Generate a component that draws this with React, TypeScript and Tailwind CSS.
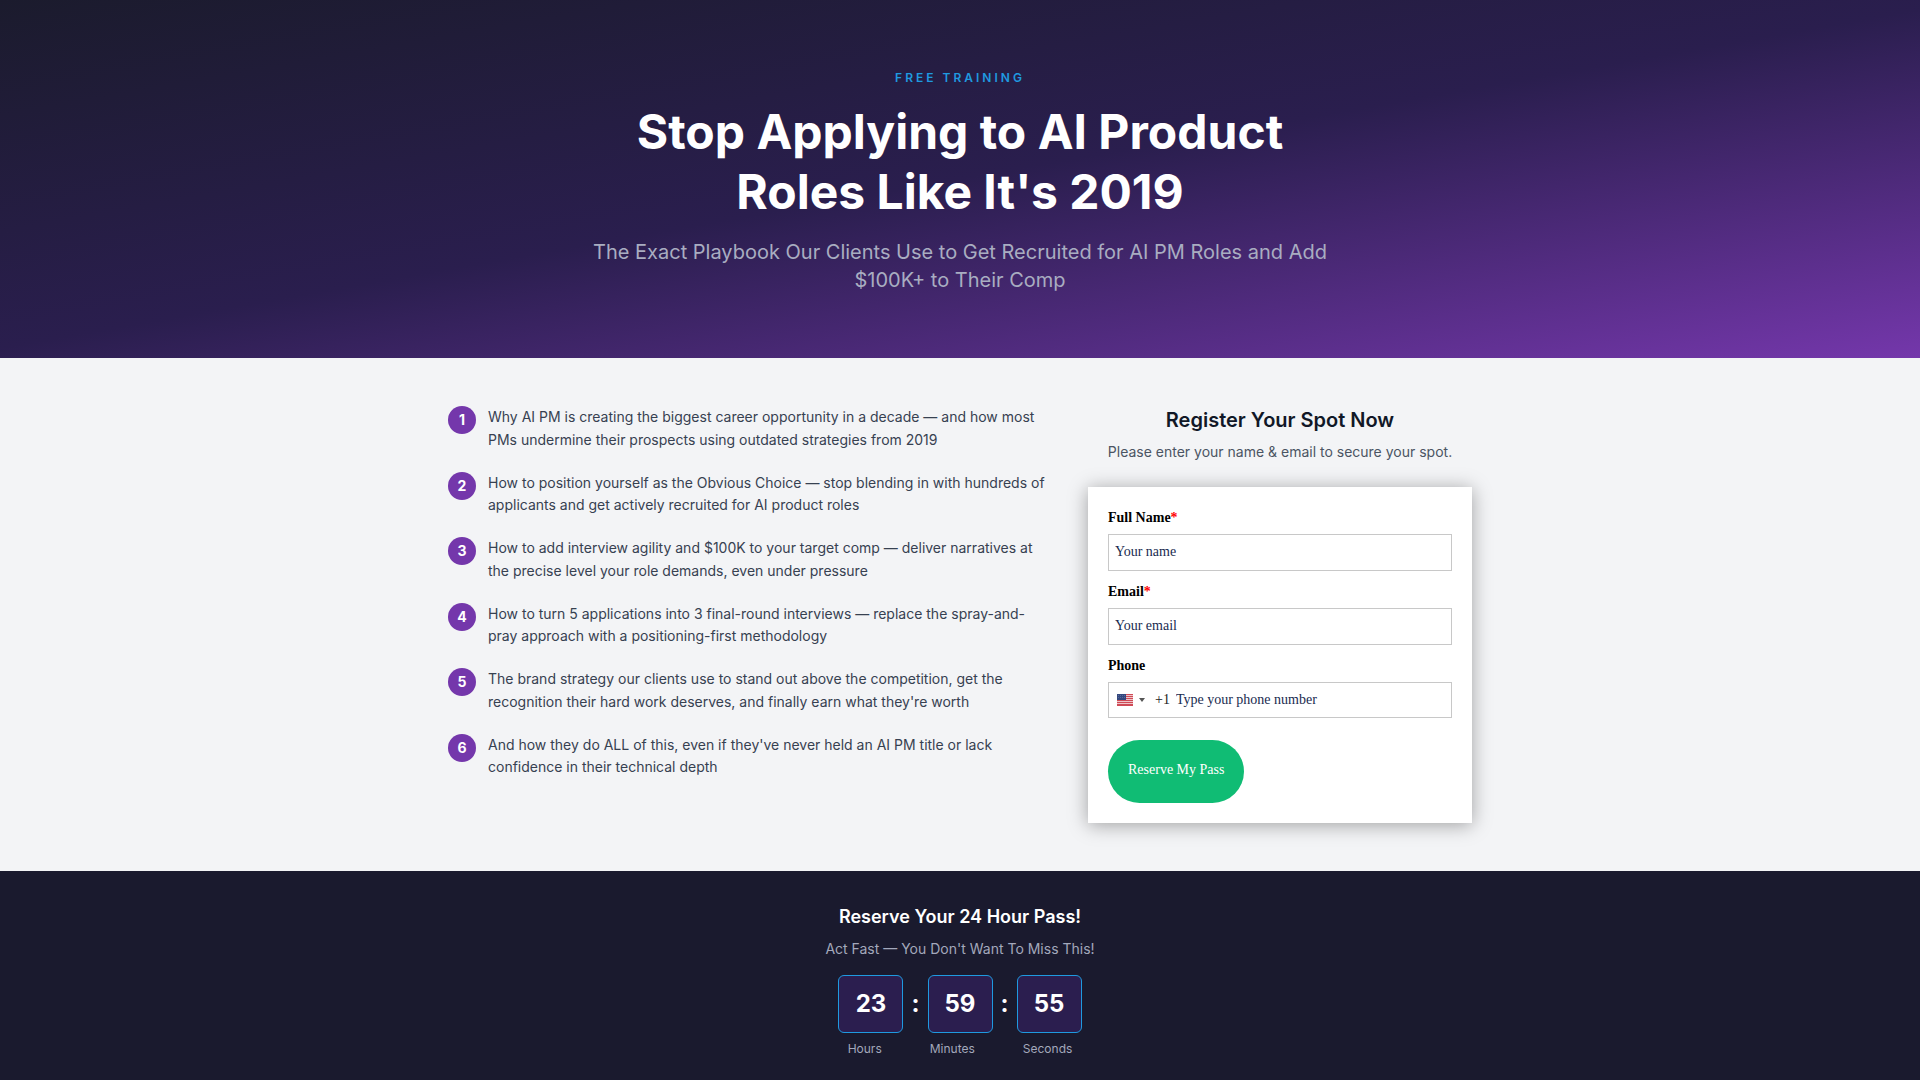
import React, { Fragment } from "react";

const points = [
  "Why AI PM is creating the biggest career opportunity in a decade — and how most PMs undermine their prospects using outdated strategies from 2019",
  "How to position yourself as the Obvious Choice — stop blending in with hundreds of applicants and get actively recruited for AI product roles",
  "How to add interview agility and $100K to your target comp — deliver narratives at the precise level your role demands, even under pressure",
  "How to turn 5 applications into 3 final-round interviews — replace the spray-and-pray approach with a positioning-first methodology",
  "The brand strategy our clients use to stand out above the competition, get the recognition their hard work deserves, and finally earn what they're worth",
  "And how they do ALL of this, even if they've never held an AI PM title or lack confidence in their technical depth",
];

const countdown = ["23", "59", "55"];
const units = ["Hours", "Minutes", "Seconds"];

const labelClass = "mb-[5px] block text-sm leading-[22px] font-bold text-black";
const inputClass =
  "block h-[37px] w-full border border-[#c8c8c8] bg-white px-1.5 pb-0.5 text-sm text-[#192b50] placeholder:text-[#192b50] placeholder:opacity-100 outline-none";

function Flag() {
  return (
    <svg viewBox="0 0 16 12" className="h-3 w-4" aria-hidden="true">
      <rect width="16" height="12" fill="#eec4c8" />
      {[0, 2, 4, 6, 8, 10].map((y) => (
        <rect key={y} y={y} width="16" height="1" fill="#cf4a56" />
      ))}
      <rect y="11" width="16" height="1" fill="#cf4a56" />
      <rect width="9" height="6" fill="#34487e" />
      {[1, 3, 5, 7].map((x) => (
        <g key={x} fill="#56679a">
          <rect x={x} y="1" width="1" height="1" />
          <rect x={x} y="3" width="1" height="1" />
        </g>
      ))}
    </svg>
  );
}

export default function App() {
  return (
    <div className="flex min-h-screen flex-col bg-[#1a1a2e] font-['Inter',sans-serif]">
      <header className="bg-[linear-gradient(170deg,#1b1b2d_0%,#2a1e4e_50%,#7437ab_100%)] px-5 py-16 text-center">
        <p className="text-xs leading-7 font-semibold tracking-[3px] text-[#1f9ae0]">FREE TRAINING</p>
        <h1 className="mx-auto mt-2.5 max-w-[760px] text-5xl leading-[60px] font-bold text-white">
          Stop Applying to AI Product Roles Like It's 2019
        </h1>
        <p className="mx-auto mt-4 max-w-[760px] text-xl leading-7 text-[#a9adc1]">
          The Exact Playbook Our Clients Use to Get Recruited for AI PM Roles and Add $100K+ to Their Comp
        </p>
      </header>

      <main className="bg-[#f3f4f6] px-5 py-12">
        <div className="mx-auto grid max-w-[1024px] grid-cols-[minmax(0,1fr)_384px] gap-10">
          <ol className="flex flex-col gap-5">
            {points.map((point, i) => (
              <li key={point} className="flex gap-3">
                <span className="flex size-7 shrink-0 items-center justify-center rounded-full bg-[#7437ab] text-sm font-bold text-white">
                  {i + 1}
                </span>
                <p className="text-sm leading-relaxed text-[#374151]">{point}</p>
              </li>
            ))}
          </ol>

          <section>
            <h2 className="text-center text-xl leading-7 font-semibold text-[#111827]">Register Your Spot Now</h2>
            <p className="mt-2 text-center text-sm leading-5 text-[#4b5563]">
              Please enter your name &amp; email to secure your spot.
            </p>
            <form
              className="mt-[25px] bg-white p-5 font-['Liberation_Serif',serif] shadow-[0_2px_18px_rgba(0,0,0,0.35)]"
              onSubmit={(e) => e.preventDefault()}
            >
              <div className="flex flex-col gap-2.5">
                <div>
                  <label htmlFor="name" className={labelClass}>
                    Full Name<span className="text-[#ff0000]">*</span>
                  </label>
                  <input id="name" type="text" className={inputClass} placeholder="Your name" />
                </div>
                <div>
                  <label htmlFor="email" className={labelClass}>
                    Email<span className="text-[#ff0000]">*</span>
                  </label>
                  <input id="email" type="email" className={inputClass} placeholder="Your email" />
                </div>
                <div>
                  <label htmlFor="phone" className={labelClass}>
                    Phone
                  </label>
                  <div className="flex h-9 items-center border border-[#c8c8c8] bg-white pl-2 text-sm">
                    <button type="button" aria-label="Country code" className="flex items-center gap-1.5">
                      <Flag />
                      <svg viewBox="0 0 6 4" className="h-1 w-1.5" aria-hidden="true">
                        <path d="M0 0h6L3 4z" fill="#555" />
                      </svg>
                    </button>
                    <span className="ml-2.5 text-[#222222]">+1</span>
                    <input
                      id="phone"
                      type="tel"
                      className="ml-1.5 min-w-0 flex-1 text-[#192b50] outline-none placeholder:text-[#192b50] placeholder:opacity-100"
                      placeholder="Type your phone number"
                    />
                  </div>
                </div>
              </div>
              <button
                type="submit"
                className="mt-[22px] block rounded-[32px] bg-[#10bc74] px-5 pt-5 pb-[23px] text-sm leading-5 text-white"
              >
                Reserve My Pass
              </button>
            </form>
          </section>
        </div>
      </main>

      <footer className="px-5 pt-8 pb-5 text-center">
        <h2 className="text-lg leading-7 font-semibold text-white">Reserve Your 24 Hour Pass!</h2>
        <p className="mt-2 text-sm leading-5 text-[#a3a8bb]">Act Fast — You Don't Want To Miss This!</p>
        <div className="mt-4 flex items-center justify-center gap-2 text-2xl leading-8 font-bold text-white">
          {countdown.map((value, i) => (
            <Fragment key={units[i]}>
              {i > 0 && <span>:</span>}
              <span className="min-w-[65px] rounded-md border border-[#1f9ae0] bg-[#2b1e4f] px-4 py-3">{value}</span>
            </Fragment>
          ))}
        </div>
        <div className="mt-2 flex justify-center gap-12 text-xs leading-4 text-[#a3a8bb]">
          {units.map((unit) => (
            <span key={unit}>{unit}</span>
          ))}
        </div>
      </footer>
    </div>
  );
}
